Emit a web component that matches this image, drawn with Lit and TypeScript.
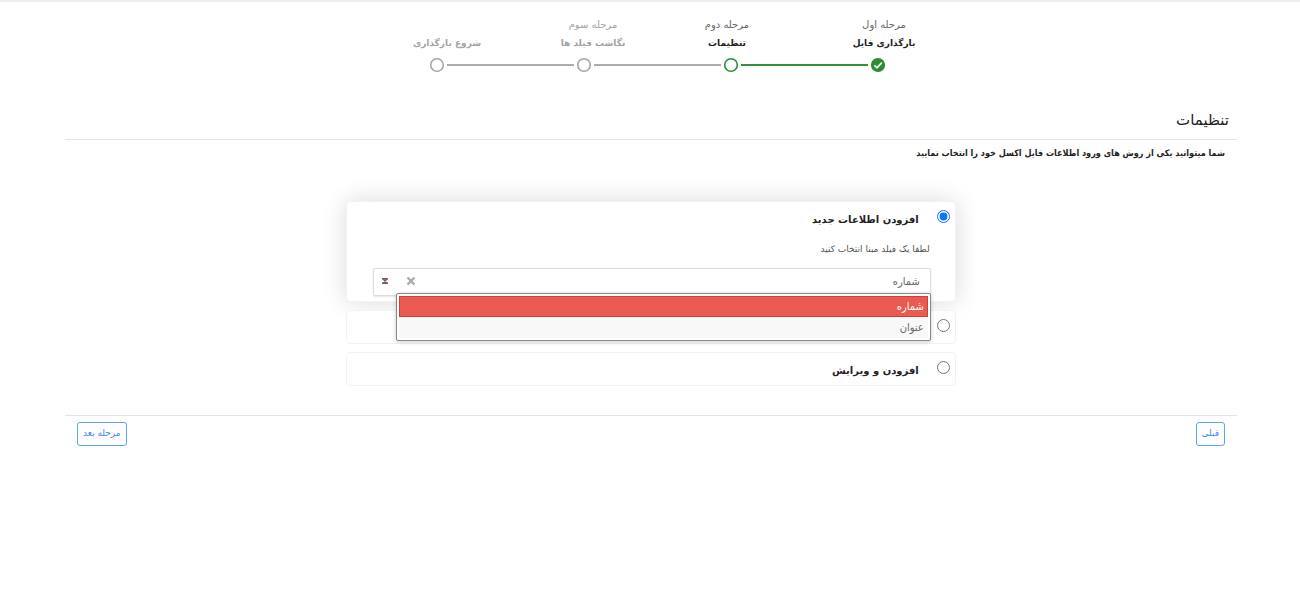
import { LitElement, html, css, nothing } from "lit";
import { customElement, state } from "lit/decorators.js";
import { classMap } from "lit/directives/class-map.js";

interface Step {
  order?: string;
  title: string;
  status: "done" | "current" | "pending";
}

const STEPS: Step[] = [
  { order: "مرحله اول", title: "بارگذاری فایل", status: "done" },
  { order: "مرحله دوم", title: "تنظیمات", status: "current" },
  { order: "مرحله سوم", title: "نگاشت فیلد ها", status: "pending" },
  { title: "شروع بارگذاری", status: "pending" },
];

@customElement("import-stepper")
class ImportStepper extends LitElement {
  static styles = css`
    :host {
      display: block;
    }
    .labels {
      display: grid;
      grid-template-columns: 160px 154px 114px 178px;
      justify-content: center;
      align-items: end;
      margin: 0;
      padding: 0 0 0 20px;
      list-style: none;
      height: 36px;
      text-align: center;
      font-size: 10px;
      line-height: 18px;
      color: #666;
      white-space: nowrap;
    }
    .title {
      display: block;
      font-size: 9px;
      font-weight: bold;
      color: #222;
    }
    .pending,
    .pending .title {
      color: #a3a3a3;
    }
    .track {
      display: flex;
      justify-content: center;
      align-items: center;
      gap: 2px;
      margin-top: 5px;
      padding-left: 12px;
    }
    .dot {
      flex: none;
      display: block;
      width: 16px;
      height: 16px;
    }
    .line {
      width: 127px;
      height: 2px;
      background: #adadad;
    }
    .line.reached {
      background: #35923c;
    }
  `;

  private dot(step: Step) {
    const done = step.status === "done";
    const color = step.status === "pending" ? "#a6a6a6" : "#2e8b35";
    return html`<svg class="dot" viewBox="0 0 16 16" aria-hidden="true">
      <circle cx="8" cy="8" r="6.3" fill=${done ? color : "#fff"} stroke=${color} stroke-width="1.6"></circle>
      ${done
        ? html`<svg viewBox="0 0 16 16"><path d="M4.4 8.4 7 10.8 11.8 5.6" fill="none" stroke="#fff" stroke-width="1.7"></path></svg>`
        : nothing}
    </svg>`;
  }

  render() {
    return html`
      <ol class="labels">
        ${STEPS.map(
          (s) => html`<li class=${classMap({ pending: s.status === "pending" })}>
            ${s.order ?? nothing}<span class="title">${s.title}</span>
          </li>`,
        )}
      </ol>
      <div class="track">
        ${STEPS.map(
          (s, i) => html`${i > 0
            ? html`<span class=${classMap({ line: true, reached: s.status === "current" })}></span>`
            : nothing}${this.dot(s)}`,
        )}
      </div>
    `;
  }
}

@customElement("field-select")
class FieldSelect extends LitElement {
  static styles = css`
    :host {
      display: block;
      position: relative;
      color: #666;
      font-family: "DejaVu Sans Condensed", "DejaVu Sans", sans-serif;
      font-size: 11px;
    }
    .box {
      display: flex;
      align-items: center;
      height: 28px;
      box-sizing: border-box;
      border: 1px solid #ddd;
      border-radius: 2px;
      background: #fff;
      box-shadow: 0 1px 2px #0000001a;
    }
    select {
      flex: 1;
      min-width: 0;
      height: 26px;
      padding: 0 10px 2px;
      border: 0;
      appearance: none;
      background: none;
      font: inherit;
      color: inherit;
    }
    button {
      display: grid;
      place-items: center;
      width: 20px;
      height: 24px;
      padding: 0 0 2px;
      border: 0;
      background: none;
    }
    .toggle {
      margin: 0 6px 0 1px;
    }
    svg {
      display: block;
    }
    .menu {
      position: absolute;
      z-index: 2;
      top: 25px;
      right: 0;
      left: 23px;
      box-sizing: border-box;
      margin: 0;
      padding: 2px;
      list-style: none;
      border: 1px solid #888;
      border-radius: 2px;
      background: #fff;
      box-shadow: 0 1px 4px #0003;
    }
    .option {
      box-sizing: border-box;
      height: 21px;
      padding: 0 3px;
      border: 1px solid #f8f8f8;
      background: #f8f8f8;
      line-height: 19px;
    }
    .option.selected {
      border-color: #c9413b;
      background: #eb5a50;
      color: #fff;
    }
  `;

  @state() private value = "شماره";
  private options = ["شماره", "عنوان"];

  render() {
    return html`
      <div class="box">
        <select
          aria-label="فیلد مبنا"
          .value=${this.value}
          @change=${(e: Event) => (this.value = (e.target as HTMLSelectElement).value)}
        >
          ${this.options.map((o) => html`<option>${o}</option>`)}
        </select>
        <button type="button" aria-label="پاک کردن">
          <svg width="10" height="10" viewBox="0 0 10 10">
            <path d="M1.5 1.5 8.5 8.5M8.5 1.5 1.5 8.5" stroke="#aaa" stroke-width="2.4"></path>
          </svg>
        </button>
        <button class="toggle" type="button" aria-label="باز کردن فهرست">
          <svg width="6" height="6" viewBox="0 0 6 6">
            <path d="M0 .7H6M0 5.3H6M1 1 5 5M5 1 1 5" fill="none" stroke="#765f5f" stroke-width="1.5"></path>
          </svg>
        </button>
      </div>
      <ul class="menu" role="listbox">
        ${this.options.map(
          (o) => html`<li
            role="option"
            aria-selected=${o === this.value}
            class=${classMap({ option: true, selected: o === this.value })}
            @click=${() => (this.value = o)}
          >${o}</li>`,
        )}
      </ul>
    `;
  }
}

@customElement("app-root")
class AppRoot extends LitElement {
  static styles = css`
    :host {
      display: block;
      direction: rtl;
      border-top: 2px solid #eee;
      background: #fff;
      color: #222;
      font-family: "DejaVu Sans", sans-serif;
      font-size: 10px;
    }
    .page {
      padding: 14px 63px 0 65px;
    }
    h1 {
      margin: 37px 0 0;
      padding: 0 8px 9px;
      border-bottom: 1px solid #e4e4e4;
      font-size: 15px;
      font-weight: normal;
      line-height: 20px;
    }
    .intro {
      margin: 0;
      padding: 3px 12px 5px;
      font-family: "DejaVu Sans Condensed", "DejaVu Sans", sans-serif;
      font-size: 9px;
      font-weight: bold;
      line-height: 20px;
    }
    .choices {
      display: grid;
      gap: 8px;
      width: 52%;
      margin: 33px auto 29px;
    }
    .card {
      box-sizing: border-box;
      padding: 6px 5px 2px 26px;
      border: 1px solid #f2f2f2;
      border-radius: 4px;
      background: #fff;
    }
    .card.active {
      padding-bottom: 5px;
      box-shadow: 0 0 24px #00000026;
    }
    .choice {
      display: flex;
      align-items: flex-start;
      gap: 18px;
      font-size: 10px;
      font-weight: bold;
      line-height: 24px;
      min-height: 24px;
    }
    .choice input {
      width: 13px;
      height: 13px;
      margin: 2px 0 0;
      accent-color: #0a75ff;
    }
    .details {
      padding-right: 19px;
    }
    .hint {
      margin: 6px 1px 8px;
      font-size: 9px;
      line-height: 22px;
      color: #555;
    }
    .actions {
      display: flex;
      justify-content: space-between;
      padding: 6px 12px;
      border-top: 1px solid #e4e4e4;
    }
    .actions button {
      height: 24px;
      padding: 0 5px 2px;
      border: 1px solid #57a3ff;
      border-radius: 3px;
      background: #fff;
      color: #4385f5;
      font: 9px "DejaVu Sans", sans-serif;
    }
  `;

  @state() private mode = "add";

  private choice(id: string, name: string, captioned = true) {
    return html`<label class="choice">
      <input
        type="radio"
        name="mode"
        aria-label=${name}
        .checked=${this.mode === id}
        @change=${() => (this.mode = id)}
      />${captioned ? name : nothing}</label>`;
  }

  render() {
    return html`
      <main class="page">
        <import-stepper></import-stepper>
        <h1>تنظیمات</h1>
        <p class="intro">شما میتوانید یکی از روش های ورود اطلاعات فایل اکسل خود را انتخاب نمایید</p>
        <div class="choices">
          <section class="card active">
            ${this.choice("add", "افزودن اطلاعات جدید")}
            <div class="details">
              <p class="hint">لطفا یک فیلد مبنا انتخاب کنید</p>
              <field-select></field-select>
            </div>
          </section>
          <section class="card">${this.choice("edit", "ویرایش", false)}</section>
          <section class="card">${this.choice("both", "افزودن و ویرایش")}</section>
        </div>
        <footer class="actions">
          <button type="button">قبلی</button>
          <button type="button">مرحله بعد</button>
        </footer>
      </main>
    `;
  }
}
